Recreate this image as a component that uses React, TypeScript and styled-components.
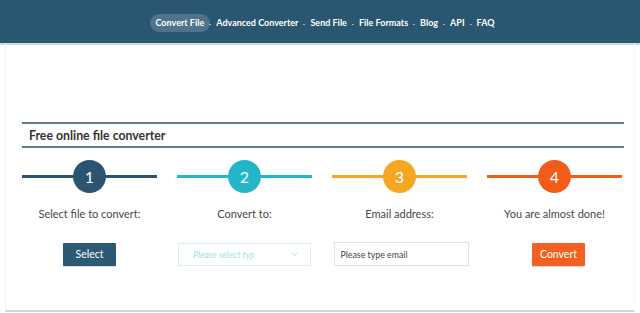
// Libraries
import React, { FC } from 'react';
import styled, { createGlobalStyle } from 'styled-components';

const GlobalStyle = createGlobalStyle`
  html, body {
    margin: 0;
    padding: 0;
    background: #ffffff;
    font-family: Lato, "Open Sans", sans-serif;
  }
`;

const Header = styled.header`
  height: 43px;
  background-color: #295670;
  box-shadow: 0 2px 1px #c9dbe3;
  display: flex;
  justify-content: center;
  align-items: center;
`;

const NavList = styled.ul`
  list-style-type: none;
  display: flex;
  align-items: center;
  margin: 2px 0 0;
  padding: 0 0 0 10px;
`;

const NavItem = styled.li<{ active?: boolean }>`
  font-size: 9px;
  font-weight: 700;
  color: #ffffff;
  padding: 0 6px;
  height: 18px;
  line-height: 18px;
  border-radius: 9px;
  background-color: ${props => props.active ? 'rgba(255, 255, 255, 0.18)' : 'transparent'};
`;

const NavDot = styled.li`
  width: 2px;
  height: 1px;
  margin: 3px -1px 0;
  background-color: rgba(255, 255, 255, 0.55);
`;

const Card = styled.main`
  box-sizing: border-box;
  margin: 0 5px;
  height: 269px;
  border-left: 1px solid #f4f4f4;
  border-right: 1px solid #f8f8f8;
  border-bottom: 2px solid #d6d6d6;
  padding: 79px 10px 0 16px;
`;

const TitleBar = styled.div`
  height: 22px;
  border-top: 2px solid #5e7e8a;
  border-bottom: 2px solid #5e7e8a;
  display: flex;
  align-items: center;
  padding-left: 7px;
  font-size: 12.3px;
  font-weight: 700;
  color: #333333;
`;

const Steps = styled.div`
  display: grid;
  grid-template-columns: repeat(4, 135px);
  column-gap: 20px;
  margin-top: 12px;
`;

const Step = styled.div`
  display: flex;
  flex-direction: column;
  align-items: center;
`;

const StepHead = styled.div<{ color: string }>`
  position: relative;
  width: 100%;
  height: 33px;
  display: flex;
  justify-content: center;
  align-items: center;

  &::before {
    content: "";
    position: absolute;
    left: 0;
    right: 0;
    top: 15px;
    height: 3px;
    background-color: ${props => props.color};
  }
`;

const Circle = styled.div<{ color: string }>`
  position: relative;
  width: 33px;
  height: 33px;
  border-radius: 50%;
  background-color: ${props => props.color};
  color: #ffffff;
  font-size: 16px;
  font-weight: 400;
  display: flex;
  justify-content: center;
  align-items: center;
`;

const StepLabel = styled.div`
  margin-top: 14px;
  font-size: 11px;
  line-height: 14px;
  color: #474747;
`;

const Control = styled.div<{ shift?: number }>`
  margin-top: 21px;
  height: 24px;
  display: flex;
  justify-content: center;
  align-items: center;
  width: 100%;
  padding-left: ${props => props.shift || 0}px;
`;

const Button = styled.button<{ color: string }>`
  width: 53px;
  height: 23px;
  padding: 0;
  border: 0;
  border-radius: 1px;
  background-color: ${props => props.color};
  color: #ffffff;
  font-family: Lato, "Open Sans", sans-serif;
  font-size: 10.5px;
  box-shadow: 0 1px 1px rgba(0, 0, 0, 0.15);
`;

const SelectBox = styled.div`
  box-sizing: border-box;
  width: 133px;
  height: 23px;
  border: 1px solid #d4f0f3;
  display: flex;
  align-items: center;
  justify-content: space-between;
  padding: 0 12px 0 14px;
  font-size: 9px;
  font-style: italic;
  color: #a9dde4;
`;

const EmailInput = styled.div`
  box-sizing: border-box;
  width: 136px;
  height: 24px;
  border: 1px solid #e3e3e3;
  display: flex;
  align-items: center;
  padding-left: 6px;
  font-size: 8.8px;
  color: #444444;
`;

type StepType = {
  num: number;
  color: string;
  label: string;
  shift?: number;
  control: React.ReactNode;
};

const NAV = ['Convert File', 'Advanced Converter', 'Send File', 'File Formats', 'Blog', 'API', 'FAQ'];

const STEPS: StepType[] = [
  {
    num: 1,
    color: '#2a5470',
    label: 'Select file to convert:',
    control: <Button color='#2c5a74'>Select</Button>,
  },
  {
    num: 2,
    color: '#22b6c8',
    label: 'Convert to:',
    control: (
      <SelectBox>
        <span>Please select typ</span>
        <svg width='7' height='5' viewBox='0 0 7 5'>
          <path d='M1 1l2.5 2.5L6 1' fill='none' stroke='#a9dde4' strokeWidth='1' />
        </svg>
      </SelectBox>
    ),
  },
  {
    num: 3,
    color: '#f5a623',
    label: 'Email address:',
    shift: 3,
    control: <EmailInput>Please type email</EmailInput>,
  },
  {
    num: 4,
    color: '#f25c19',
    label: 'You are almost done!',
    shift: 8,
    control: <Button color='#f26120'>Convert</Button>,
  },
];

const App: FC = () => {
  return (
    <>
      <GlobalStyle />
      <Header>
        <NavList>
          {NAV.map((n, i) => (
            <React.Fragment key={n}>
              {i > 0 && <NavDot />}
              <NavItem active={i === 0}>{n}</NavItem>
            </React.Fragment>
          ))}
        </NavList>
      </Header>
      <Card>
        <TitleBar>Free online file converter</TitleBar>
        <Steps>
          {STEPS.map(s => (
            <Step key={s.num}>
              <StepHead color={s.color}>
                <Circle color={s.color}>{s.num}</Circle>
              </StepHead>
              <StepLabel>{s.label}</StepLabel>
              <Control shift={s.shift}>{s.control}</Control>
            </Step>
          ))}
        </Steps>
      </Card>
    </>
  );
};

export default App;
